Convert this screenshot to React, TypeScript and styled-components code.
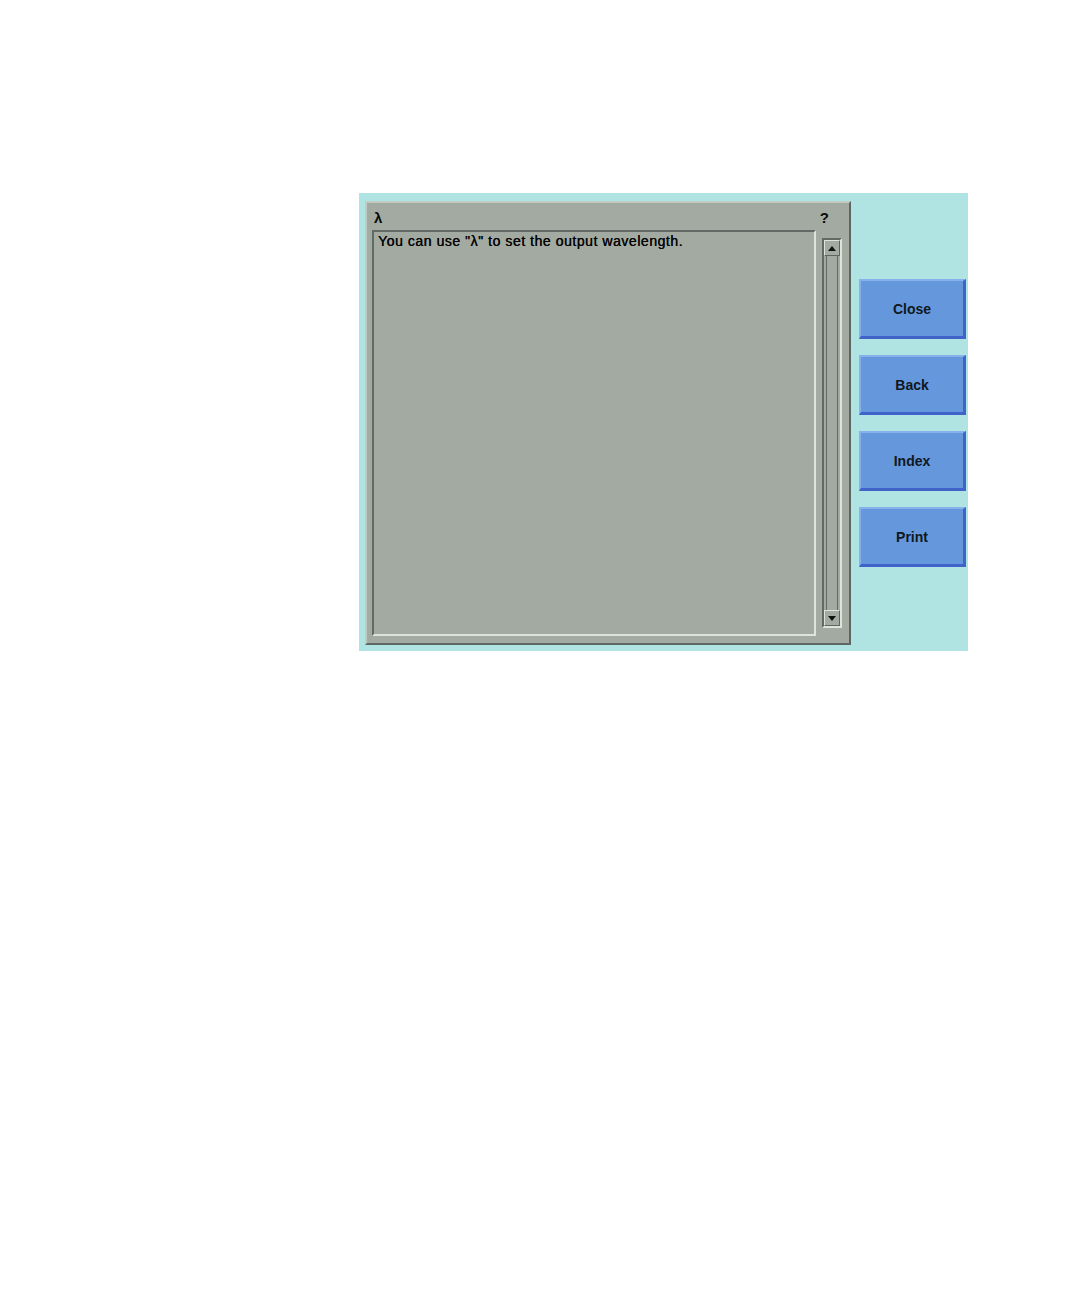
import React from "react";
import styled, { createGlobalStyle } from "styled-components";

const GlobalStyle = createGlobalStyle`
  body {
    margin: 0;
    background: #ffffff;
    font-family: "Liberation Sans", Arial, sans-serif;
  }
`;

const Page = styled.div`
  width: 1080px;
  height: 1296px;
  padding: 193px 0 0 359px;
  box-sizing: border-box;
`;

const Screen = styled.div`
  width: 609px;
  height: 458px;
  background: #b0e4e3;
  box-sizing: border-box;
  padding: 8px 2px 6px 6px;
  display: flex;
  align-items: flex-start;
`;

const HelpPanel = styled.div`
  width: 486px;
  height: 444px;
  box-sizing: border-box;
  background: #a3aaa2;
  border-top: 2px solid #c3cac2;
  border-left: 2px solid #c3cac2;
  border-bottom: 2px solid #5e6664;
  border-right: 2px solid #5e6664;
  display: grid;
  grid-template-columns: 444px 20px;
  grid-template-rows: 27px 1fr;
  column-gap: 6px;
  padding: 0 0 7px 5px;
`;

const TitleRow = styled.div`
  grid-column: 1 / 3;
  display: flex;
  align-items: center;
  justify-content: space-between;
  padding: 1px 13px 0 2px;
  font-size: 15px;
  font-weight: bold;
  color: #0a0a0a;
`;

const TextBox = styled.div`
  box-sizing: border-box;
  height: 406px;
  border-top: 2px solid #626a66;
  border-left: 2px solid #626a66;
  border-bottom: 2px solid #dde4da;
  border-right: 2px solid #dde4da;
  padding: 1px 4px;
  font-size: 14px;
  color: #050505;
  letter-spacing: 0.55px;
  text-shadow: 0.3px 0 0 #050505;
`;

const ScrollBar = styled.div`
  margin-top: 8px;
  height: 390px;
  box-sizing: border-box;
  border-top: 2px solid #626a66;
  border-left: 2px solid #626a66;
  border-bottom: 2px solid #dde4da;
  border-right: 2px solid #dde4da;
  display: flex;
  flex-direction: column;
  justify-content: space-between;
`;

const Track = styled.div`
  flex: 1;
  margin: 0 2px;
  border-left: 1px solid #626a66;
  border-right: 1px solid #626a66;
`;

const Arrow = styled.div`
  height: 16px;
  box-sizing: border-box;
  background: #a3aaa2;
  border-top: 1px solid #dde4da;
  border-left: 1px solid #dde4da;
  border-bottom: 1px solid #5e6664;
  border-right: 1px solid #5e6664;
  display: flex;
  align-items: center;
  justify-content: center;
`;

const ButtonColumn = styled.div`
  display: flex;
  flex-direction: column;
  gap: 16px;
  margin-left: 8px;
  margin-top: 78px;
`;

const SoftKey = styled.button`
  width: 107px;
  height: 60px;
  box-sizing: border-box;
  background: #6497dc;
  border-top: 2px solid #87b1ec;
  border-left: 2px solid #87b1ec;
  border-bottom: 3px solid #3f63c9;
  border-right: 3px solid #3f63c9;
  font-family: "Liberation Sans", Arial, sans-serif;
  font-size: 14px;
  font-weight: bold;
  color: #101820;
  padding: 0;
`;

const ArrowGlyph = ({ up }: { up?: boolean }) => (
  <svg width="8" height="5" viewBox="0 0 8 5">
    <path d={up ? "M0 5 L4 0 L8 5 Z" : "M0 0 L4 5 L8 0 Z"} fill="#111" />
  </svg>
);

const App: React.FC = () => {
  return (
    <>
      <GlobalStyle />
      <Page>
        <Screen>
          <HelpPanel>
            <TitleRow>
              <span>λ</span>
              <span>?</span>
            </TitleRow>
            <TextBox>You can use "λ" to set the output wavelength.</TextBox>
            <ScrollBar>
              <Arrow>
                <ArrowGlyph up />
              </Arrow>
              <Track />
              <Arrow>
                <ArrowGlyph />
              </Arrow>
            </ScrollBar>
          </HelpPanel>
          <ButtonColumn>
            <SoftKey>Close</SoftKey>
            <SoftKey>Back</SoftKey>
            <SoftKey>Index</SoftKey>
            <SoftKey>Print</SoftKey>
          </ButtonColumn>
        </Screen>
      </Page>
    </>
  );
};

export default App;
